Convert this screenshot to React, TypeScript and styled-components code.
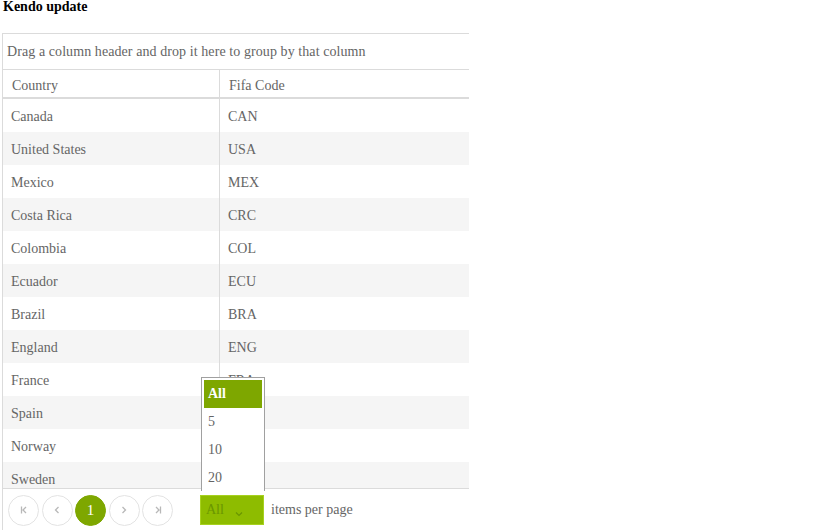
import React from "react";
import styled, { createGlobalStyle } from "styled-components";

const Global = createGlobalStyle`
  html, body { margin: 0; padding: 0; background: #fff; }
  body { font-family: "Liberation Serif", "Times New Roman", serif; font-size: 14px; color: #656565; overflow: hidden; }
`;

const Page = styled.div`
  width: 819px;
  height: 530px;
  position: relative;
  overflow: hidden;
`;

const Title = styled.h1`
  margin: 0;
  padding: 0 0 0 3px;
  font-size: 14px;
  font-weight: bold;
  color: #000;
  line-height: 13px;
  height: 33px;
`;

const Grid = styled.div`
  margin-left: 2px;
  width: 467px;
  height: 497px;
  border-left: 1px solid #dbdbdb;
  border-top: 1px solid #dbdbdb;
  box-sizing: border-box;
  display: flex;
  flex-direction: column;
  position: relative;
`;

const GroupPanel = styled.div`
  height: 35px;
  line-height: 35px;
  padding-left: 4px;
  border-bottom: 1px solid #dbdbdb;
  white-space: nowrap;
  letter-spacing: 0.08px;
`;

const HeaderRow = styled.div`
  display: grid;
  grid-template-columns: 216px 1fr;
  height: 27px;
  border-bottom: 2px solid #dbdbdb;
`;

const HeaderCell = styled.div<{ $first?: boolean }>`
  line-height: 31px;
  padding-left: 9px;
  border-left: ${(p) => (p.$first ? "none" : "1px solid #dbdbdb")};
`;

const Body = styled.div`
  height: 389px;
  overflow: hidden;
`;

const Row = styled.div<{ $alt: boolean }>`
  display: grid;
  grid-template-columns: 216px 1fr;
  height: 33px;
  background: ${(p) => (p.$alt ? "#f5f5f5" : "#fff")};
`;

const Cell = styled.div<{ $first?: boolean }>`
  line-height: 36px;
  padding-left: 8px;
  border-left: ${(p) => (p.$first ? "none" : "1px solid #dbdbdb")};
`;

const Pager = styled.div`
  border-top: 1px solid #dbdbdb;
  display: flex;
  align-items: center;
  padding: 3px 0 0 5px;
  height: 36px;
`;

const PageButtons = styled.div`
  display: flex;
  gap: 2.5px;
`;

const PageBtn = styled.div<{ $active?: boolean }>`
  width: 31px;
  height: 31px;
  box-sizing: border-box;
  border-radius: 50%;
  border: 1px solid ${(p) => (p.$active ? "#7ea700" : "#e3e3e3")};
  background: ${(p) => (p.$active ? "#7ea700" : "#fff")};
  color: ${(p) => (p.$active ? "#fff" : "#c8c8c8")};
  display: flex;
  align-items: center;
  justify-content: center;
  font-size: 15px;
`;

const SizeSelect = styled.div`
  margin-left: 27px;
  width: 64px;
  height: 30px;
  box-sizing: border-box;
  background: #8ebc00;
  border: 1px solid #a7d11f;
  color: #6a9600;
  display: flex;
  align-items: center;
  padding-left: 5px;
  position: relative;
`;

const Chevron = styled.svg`
  position: absolute;
  left: 33px;
  top: 15px;
`;

const PagerLabel = styled.span`
  margin-left: 7px;
`;

const Popup = styled.div`
  position: absolute;
  left: 201px;
  top: 377px;
  width: 64px;
  height: 114px;
  box-sizing: border-box;
  border: 1px solid #a0a0a0;
  border-bottom: none;
  background: #fff;
  padding: 2px 2px 0 2px;
`;

const Item = styled.div<{ $sel?: boolean }>`
  height: 28px;
  line-height: 27px;
  padding-left: 4px;
  background: ${(p) => (p.$sel ? "#7ea700" : "transparent")};
  color: ${(p) => (p.$sel ? "#fff" : "#656565")};
  font-weight: ${(p) => (p.$sel ? "bold" : "normal")};
`;

const rows = [
  ["Canada", "CAN"],
  ["United States", "USA"],
  ["Mexico", "MEX"],
  ["Costa Rica", "CRC"],
  ["Colombia", "COL"],
  ["Ecuador", "ECU"],
  ["Brazil", "BRA"],
  ["England", "ENG"],
  ["France", "FRA"],
  ["Spain", "ESP"],
  ["Norway", "NOR"],
  ["Sweden", "SWE"],
];

const Icon = ({ d }: { d: string }) => (
  <svg width="10" height="10" viewBox="0 0 10 10" fill="none" stroke="#b8b8b8" strokeWidth="1.3">
    <path d={d} />
  </svg>
);

export default function App() {
  return (
    <Page>
      <Global />
      <Title>Kendo update</Title>
      <Grid>
        <GroupPanel>Drag a column header and drop it here to group by that column</GroupPanel>
        <HeaderRow>
          <HeaderCell $first>Country</HeaderCell>
          <HeaderCell>Fifa Code</HeaderCell>
        </HeaderRow>
        <Body>
          {rows.map(([c, f], i) => (
            <Row key={c} $alt={i % 2 === 1}>
              <Cell $first>{c}</Cell>
              <Cell>{f}</Cell>
            </Row>
          ))}
        </Body>
        <Pager>
          <PageButtons>
            <PageBtn><Icon d="M2.5 1.5v7 M7 2L4 5L7 8" /></PageBtn>
            <PageBtn><Icon d="M6.5 2L3.5 5L6.5 8" /></PageBtn>
            <PageBtn $active>1</PageBtn>
            <PageBtn><Icon d="M3.5 2L6.5 5L3.5 8" /></PageBtn>
            <PageBtn><Icon d="M3 2L6 5L3 8 M7.5 1.5v7" /></PageBtn>
          </PageButtons>
          <SizeSelect>
            All
            <Chevron width="10" height="6" viewBox="0 0 10 6" fill="none" stroke="#6a9600" strokeWidth="1.2">
              <path d="M2 1.5L5 4.5L8 1.5" />
            </Chevron>
          </SizeSelect>
          <PagerLabel>items per page</PagerLabel>
        </Pager>
      </Grid>
      <Popup>
        <Item $sel>All</Item>
        <Item>5</Item>
        <Item>10</Item>
        <Item>20</Item>
      </Popup>
    </Page>
  );
}
